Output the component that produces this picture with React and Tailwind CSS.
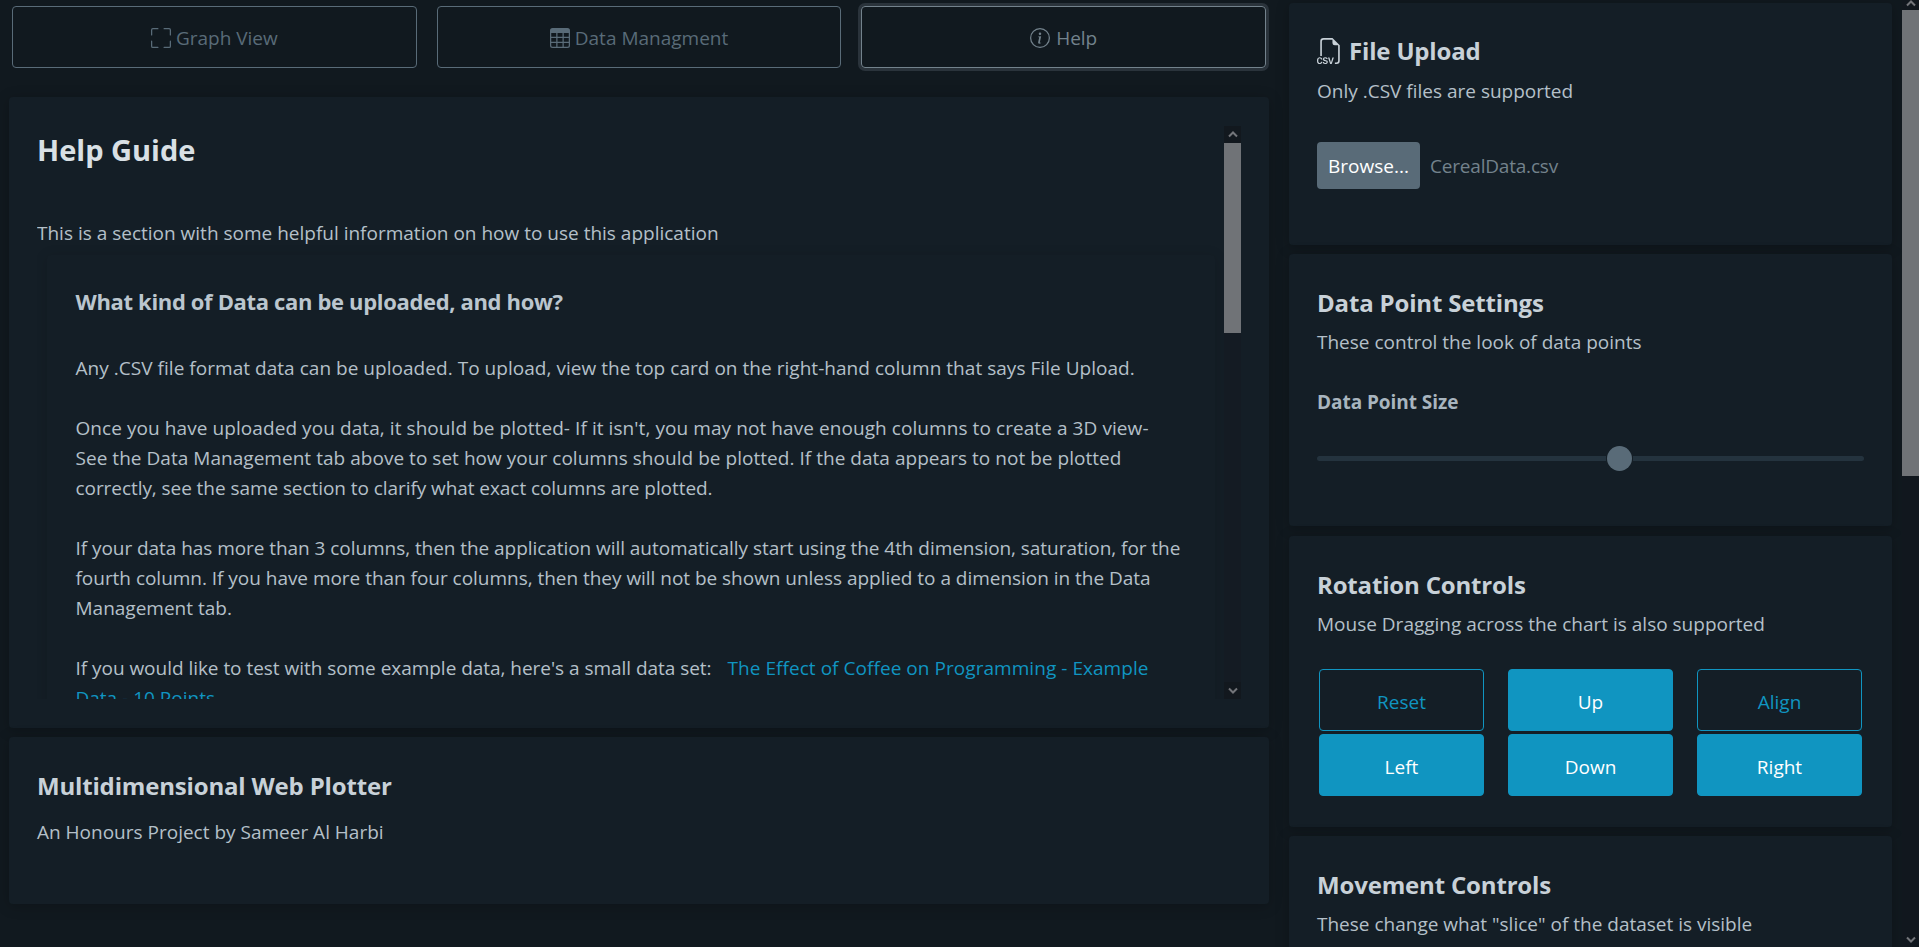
import React from 'react';
import { BsFullscreen, BsTable, BsInfoCircle, BsFiletypeCsv } from 'react-icons/bs';

const card = 'rounded bg-[#141e26] shadow-[0_2px_14px_rgba(0,0,0,0.22)]';

function Tab({ icon: Icon, label, active }) {
  return (
    <button
      className={
        'flex h-[62px] flex-1 items-center justify-center rounded border pt-px ' +
        (active
          ? 'gap-[6px] border-[#73828c] text-[#73828c] shadow-[0_0_0_3px_#2a333b]'
          : 'gap-[5px] border-[#596b78] text-[#596b78]')
      }
    >
      <Icon className="size-5" />
      <span className="pt-px">{label}</span>
    </button>
  );
}

function Heading({ children }) {
  return <h3 className="text-[24px] leading-8 font-bold tracking-[-0.17px] text-[#c8d1d8]">{children}</h3>;
}

function Chevron({ down }) {
  return (
    <svg viewBox="0 0 10 6" className="h-[7px] w-[10px]" fill="none" stroke="#73757a" strokeWidth="2">
      <path d={down ? 'M1 1l4 4 4-4' : 'M1 5l4-4 4 4'} />
    </svg>
  );
}

function PadButton({ label, outline }) {
  return (
    <button
      className={
        'h-[62px] rounded border border-[#1095c1] pt-[3px] ' +
        (outline ? 'text-[#1095c1]' : 'bg-[#1095c1] text-white')
      }
    >
      {label}
    </button>
  );
}

export default function App() {
  return (
    <div className="flex h-[947px] w-[1919px] overflow-hidden bg-[#11191f] font-['Open_Sans',sans-serif] text-[19px] leading-[30px] text-[#b4c0c9]">
      <main className="ml-[9px] w-[1260px] shrink-0 pt-1.5">
        <nav className="mr-[3px] ml-[3px] flex gap-5">
          <Tab icon={BsFullscreen} label="Graph View" />
          <Tab icon={BsTable} label="Data Managment" />
          <Tab icon={BsInfoCircle} label="Help" active />
        </nav>

        <section className={card + ' mt-[29px] h-[631px] pt-[29px] pl-7'}>
          <div className="flex h-[573px] w-[1204px]">
            <div className="w-[1187px] overflow-hidden pr-[9px]">
              <h2 className="pt-[3px] text-[29px] leading-[42px] font-bold text-[#d9e0e5]">Help Guide</h2>
              <p className="mt-[47px]">This is a section with some helpful information on how to use this application</p>
              <article className="mt-[7px] ml-[10px] rounded bg-[#141e26] pt-[31px] pr-7 pl-[28.5px] shadow-[0_2px_14px_rgba(0,0,0,0.14)]">
                <h4 className="text-[22px] leading-[30px] font-bold tracking-[-0.34px] text-[#bbc6ce]">
                  What kind of Data can be uploaded, and how?
                </h4>
                <div className="mt-[37px] whitespace-nowrap">
                  <p className="tracking-[0.035px]">Any .CSV file format data can be uploaded. To upload, view the top card on the right-hand column that says File Upload.</p>
                  <p className="mt-[30px] tracking-[0.075px]">Once you have uploaded you data, it should be plotted- If it isn't, you may not have enough columns to create a 3D view-</p>
                  <p className="tracking-[0.035px]">See the Data Management tab above to set how your columns should be plotted. If the data appears to not be plotted</p>
                  <p className="tracking-[-0.065px]">correctly, see the same section to clarify what exact columns are plotted.</p>
                  <p className="mt-[30px] tracking-[-0.055px]">If your data has more than 3 columns, then the application will automatically start using the 4th dimension, saturation, for the</p>
                  <p className="tracking-[-0.03px]">fourth column. If you have more than four columns, then they will not be shown unless applied to a dimension in the Data</p>
                  <p>Management tab.</p>
                  <p className="mt-[30px] tracking-[-0.035px]">
                    If you would like to test with some example data, here's a small data set:
                    <a className="ml-4 tracking-[0.05px] text-[#1095c1]">The Effect of Coffee on Programming - Example</a>
                  </p>
                  <p className="text-[#1095c1]">Data - 10 Points</p>
                </div>
              </article>
            </div>
            <div className="flex w-[17px] flex-col items-center bg-[#141b23]">
              <div className="flex h-[17px] w-full items-center justify-center bg-[#12181e]"><Chevron /></div>
              <div className="h-[190px] w-full bg-[#707377]" />
              <div className="flex-1" />
              <div className="flex h-[17px] w-full items-center justify-center bg-[#12181e]"><Chevron down /></div>
            </div>
          </div>
        </section>

        <section className={card + ' mt-[9px] h-[167px] pt-[33px] pl-7'}>
          <Heading>Multidimensional Web Plotter</Heading>
          <p className="mt-[15px]">An Honours Project by Sameer Al Harbi</p>
        </section>
      </main>

      <aside className="ml-5 w-[603px] shrink-0 pt-[3px]">
        <section className={card + ' h-[242px] px-7 pt-8'}>
          <div className="flex items-center gap-[6px]">
            <BsFiletypeCsv className="size-[26px] text-[#c8d1d8]" />
            <Heading>File Upload</Heading>
          </div>
          <p className="mt-[9px]">Only .CSV files are supported</p>
          <div className="mt-9 flex items-center gap-[10px]">
            <button className="h-[47px] w-[103px] rounded bg-[#596b78] text-white">Browse...</button>
            <span className="tracking-[-0.2px] text-[#73828c]">CerealData.csv</span>
          </div>
        </section>

        <section className={card + ' mt-[9px] h-[272px] px-7 pt-[33px]'}>
          <Heading>Data Point Settings</Heading>
          <p className="mt-[8px]">These control the look of data points</p>
          <p className="mt-[30px] font-bold tracking-[-0.05px] text-[#a8b5bf]">Data Point Size</p>
          <div className="mt-[28px] flex h-[26px] items-center">
            <div className="h-[5px] w-[289px] rounded-l bg-[#24333e]" />
            <div className="mx-px size-[25px] shrink-0 rounded-full bg-[#596b78]" />
            <div className="h-[5px] flex-1 rounded-r bg-[#24333e]" />
          </div>
        </section>

        <section className={card + ' mt-[10px] h-[291px] px-7 pt-[33px]'}>
          <Heading>Rotation Controls</Heading>
          <p className="mt-[8px]">Mouse Dragging across the chart is also supported</p>
          <div className="mt-[30px] ml-0.5 grid w-[543px] grid-cols-3 gap-x-6 gap-y-[3px]">
            <PadButton label="Reset" outline />
            <PadButton label="Up" />
            <PadButton label="Align" outline />
            <PadButton label="Left" />
            <PadButton label="Down" />
            <PadButton label="Right" />
          </div>
        </section>

        <section className={card + ' mt-[9px] h-[200px] px-7 pt-[33px]'}>
          <Heading>Movement Controls</Heading>
          <p className="mt-[8px]">These change what "slice" of the dataset is visible</p>
        </section>
      </aside>

      <div className="ml-auto flex w-[17px] shrink-0 flex-col items-center bg-[#11171e]">
        <div className="flex h-[10px] items-start"><Chevron /></div>
        <div className="h-[466px] w-full bg-[#707377]" />
        <div className="flex-1" />
        <div className="flex h-[11px] items-start"><Chevron down /></div>
      </div>
    </div>
  );
}
